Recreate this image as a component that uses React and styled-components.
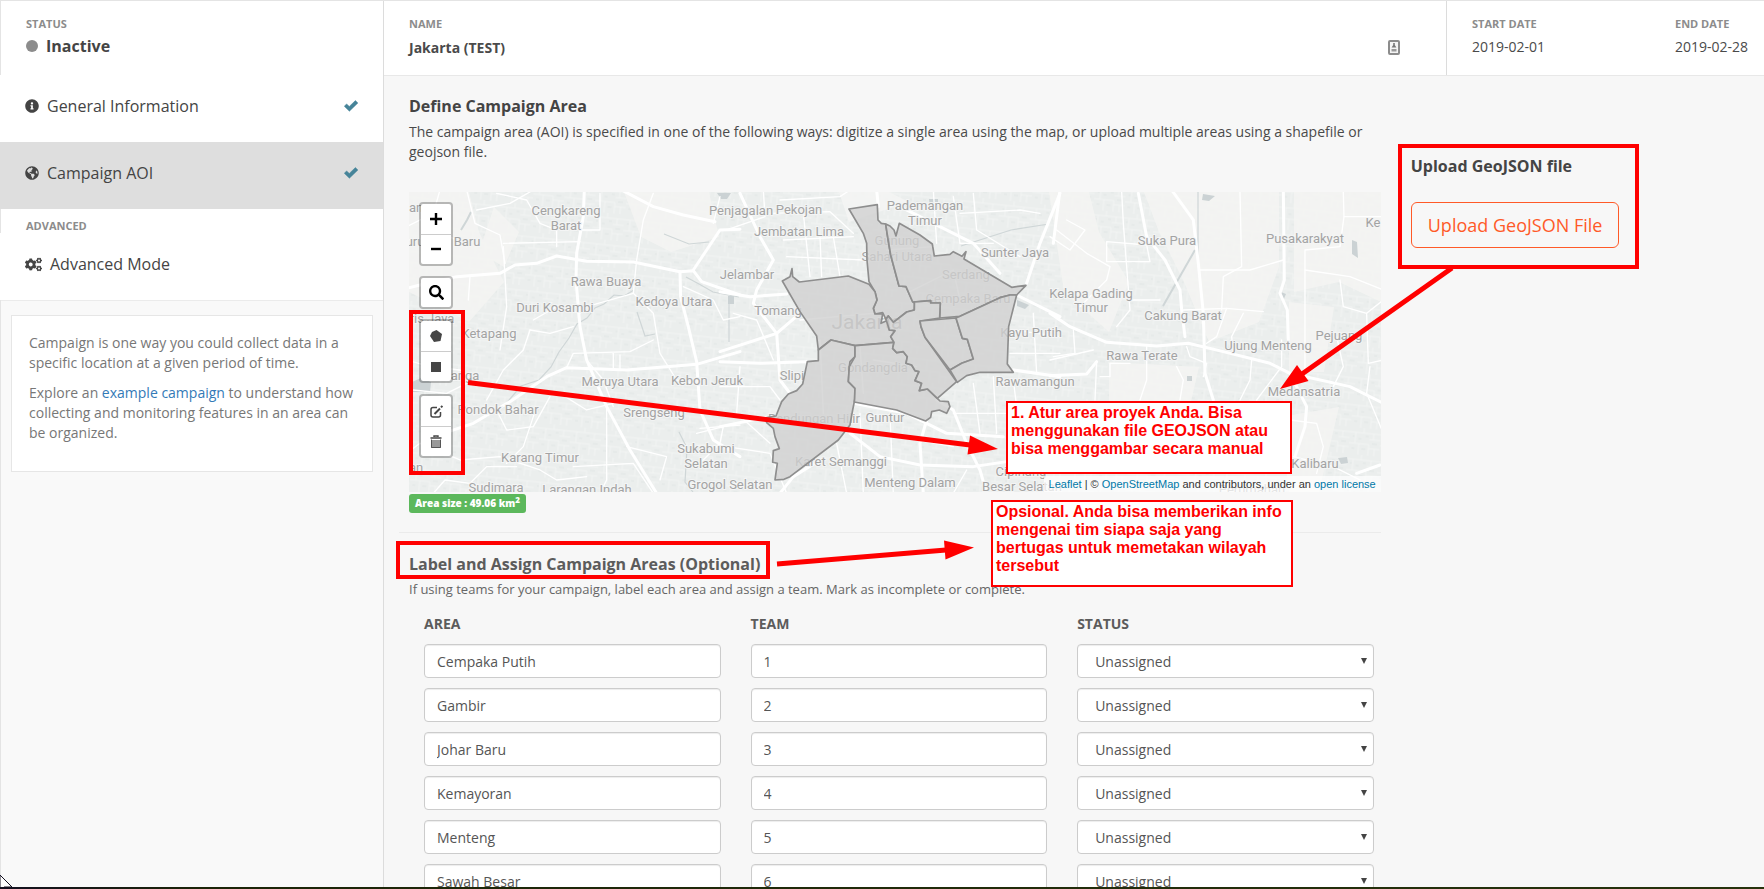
import React from "react";
import styled, { createGlobalStyle } from "styled-components";
import { FaInfoCircle, FaGlobeAmericas, FaCogs, FaSearch } from "react-icons/fa";

const GlobalStyle = createGlobalStyle`
  *, *::before, *::after { box-sizing: border-box; }
  html, body, #root { height: 100%; }
  body {
    margin: 0;
    font-family: "Open Sans", sans-serif;
    font-size: 14px;
    line-height: 20px;
    color: #4a4a4a;
    background: #f7f7f7;
  }
  h2, p { margin: 0; }
`;

const Page = styled.div`
  position: relative;
  display: flex;
  height: 100vh;
  overflow: hidden;
  border-top: 1px solid #e4e4e4;
`;

const Sidebar = styled.aside`
  flex: 0 0 384px;
  border-left: 1px solid #e4e4e4;
  border-right: 1px solid #dcdcdc;
  background: #f9f9f9;
`;

const SideTop = styled.div`
  background: #fff;
  border-bottom: 1px solid #ebebeb;
`;

const StatusBlock = styled.div`
  height: 74px;
  padding: 14px 25px 0;
`;

const Caption = styled.div`
  font-size: 11px;
  line-height: 18px;
  font-weight: 700;
  color: #8c8c8c;
  text-transform: uppercase;
`;

const StatusValue = styled.div`
  display: flex;
  align-items: center;
  gap: 8px;
  margin-top: 1px;
  font-size: 16px;
  line-height: 24px;
  font-weight: 700;
  color: #444;
`;

const Dot = styled.span`
  width: 12px;
  height: 12px;
  border-radius: 50%;
  background: #8c8c8c;
`;

const NavItem = styled.a`
  display: flex;
  align-items: center;
  gap: 8px;
  height: 67px;
  margin-left: -1px;
  padding: 0 25px 5px;
  font-size: 16px;
  color: #444;
  text-decoration: none;
  background: ${(p) => (p.$active ? "#dedede" : "#fff")};

  > span { flex: 1; }
`;

const AdvancedCaption = styled(Caption)`
  height: 24px;
  padding: 8px 25px 0;
`;

const InfoCard = styled.div`
  height: 157px;
  margin: 14px 10px 0;
  padding: 17px;
  background: #fff;
  border: 1px solid #e6e6e6;
  color: #777;

  p + p { margin-top: 10px; }
  a { color: #337ab7; text-decoration: none; }
`;

const Main = styled.main`
  flex: 1;
  min-width: 0;
`;

const Header = styled.header`
  display: flex;
  height: 75px;
  background: #fff;
  border-bottom: 1px solid #e8e8e8;
`;

const NameCell = styled.div`
  display: flex;
  flex: 1;
  justify-content: space-between;
  padding: 14px 46px 0 25px;

  svg { margin-top: 25px; }
`;

const Dates = styled.div`
  flex: 0 0 318px;
  display: grid;
  grid-template-columns: 203px 1fr;
  padding: 14px 0 0 25px;
  border-left: 1px solid #dcdcdc;
`;

const Value = styled.div`
  margin-top: ${(p) => (p.$strong ? 5 : 4)}px;
  font-weight: ${(p) => (p.$strong ? 700 : 400)};
`;

const Body = styled.div`
  display: grid;
  grid-template-columns: 3fr 1fr;
  padding-right: 31px;
`;

const AreaColumn = styled.div`
  min-width: 0;
  padding: 0 15px;
`;

const Section = styled.section`
  padding: 19px 0 0 10px;

  & + & {
    padding-top: 20px;
    border-top: 1px solid #ebebeb;
  }
`;

const Title = styled.h2`
  font-size: 16px;
  line-height: 22px;
  font-weight: 700;
  color: ${(p) => (p.$soft ? "#5c5c5c" : "#444")};
`;

const Lead = styled.p`
  margin-top: 5px;
  min-height: 40px;
`;

const SmallLead = styled.p`
  margin-top: 4px;
  font-size: 13px;
  color: #666;
`;

const MapFrame = styled.div`
  position: relative;
  height: 300px;
  margin-top: 30px;
  overflow: hidden;
  background: #eceeed;

  > svg { display: block; width: 100%; height: 100%; }
`;

const MapControls = styled.div`
  position: absolute;
  top: 10px;
  left: 10px;
  display: grid;
  gap: 10px;
`;

const ControlBar = styled.div`
  width: 34px;
  border: 2px solid rgba(0, 0, 0, 0.25);
  border-radius: 4px;
  background: #fff;
  background-clip: padding-box;
  margin-top: ${(p) => (p.$spaced ? "1px" : "0")};
`;

const ControlButton = styled.button`
  display: flex;
  align-items: center;
  justify-content: center;
  width: 30px;
  height: 30px;
  padding: 0;
  border: 0;
  background: none;
  color: #000;

  &:only-child { height: 29px; }
  & + & { border-top: 1px solid #ccc; }
`;

const Attribution = styled.div`
  position: absolute;
  right: 0;
  bottom: 0;
  padding: 0 5px;
  font: 11px/16px "Liberation Sans", Arial, sans-serif;
  color: #333;
  background: rgba(255, 255, 255, 0.7);

  a { color: #0078a8; text-decoration: none; }
`;

const Badge = styled.span`
  display: block;
  width: max-content;
  height: 19px;
  margin: 2px 0 19px;
  padding: 0 6px;
  border-radius: 3px;
  background: #5cb85c;
  color: #fff;
  font-size: 10px;
  line-height: 18px;
  font-weight: 800;

  sup { font-size: 8px; line-height: 0; }
`;

const Table = styled.table`
  display: block;
  margin-top: 15px;
  padding: 0 7px 0 15px;

  thead, tbody { display: block; }
`;

const Row = styled.tr`
  display: grid;
  grid-template-columns: repeat(3, 1fr);
  gap: 30px;
  margin-bottom: 10px;
`;

const HeadCell = styled.th`
  padding: 0;
  text-align: left;
  font-weight: 700;
  color: #5c5c5c;
`;

const Cell = styled.td`
  position: relative;
  padding: 0;
`;

const fieldStyle = `
  display: block;
  width: 100%;
  height: 34px;
  border: 1px solid #ccc;
  border-radius: 4px;
  background: #fff;
  box-shadow: inset 0 1px 1px rgba(0, 0, 0, 0.075);
  font: 14px/20px "Open Sans", sans-serif;
  color: #555;
`;

const TextField = styled.input`
  ${fieldStyle}
  padding: 6px 12px;
`;

const Select = styled.select`
  ${fieldStyle}
  appearance: none;
  padding: 7px 17px 5px;
`;

const Caret = styled.svg`
  position: absolute;
  top: 14px;
  right: 7px;
  pointer-events: none;
`;

const UploadColumn = styled.div`
  padding: 79px 15px 0;
`;

const UploadButton = styled.button`
  height: 46px;
  margin-top: 25px;
  padding: 0 16px;
  border: 1px solid #ff5a28;
  border-radius: 6px;
  background: transparent;
  color: #ff5a28;
  font: 18px/24px "Open Sans", sans-serif;
  white-space: nowrap;
`;

const Markup = styled.svg`
  position: absolute;
  top: -1px;
  left: 0;
  width: 100%;
  height: 100%;
  pointer-events: none;
`;

const Note = styled.div`
  position: absolute;
  top: ${(p) => p.$top}px;
  left: ${(p) => p.$left}px;
  width: ${(p) => p.$width}px;
  height: ${(p) => p.$height}px;
  padding: 1px 3px 0;
  border: 2px solid #f00;
  background: #fff;
  color: #f00;
  font: 700 16px/18px "Liberation Sans", Arial, sans-serif;
  white-space: pre-line;
`;

const Taskbar = styled.div`
  position: absolute;
  left: 0;
  right: 0;
  bottom: 0;
  height: 2px;
  background: linear-gradient(90deg, #141020, #1b2408 200px, #26320c);
`;

const Check = () => (
  <svg width="14" height="12" viewBox="0 0 14 12" aria-hidden="true">
    <path d="M0.3 6.3 L2.6 3.9 L5.3 6.4 L11.4 0.6 L13.9 3 L5.4 11.2 Z" fill="#468499" stroke="#468499" strokeWidth="0.5" strokeLinejoin="round" />
  </svg>
);

const places = [
  ["an", 7, 20], ["uru", 6, 54], ["Baru", 58, 54],
  ["Cengkareng", 157, 23], ["Barat", 157, 38],
  ["Rawa Buaya", 197, 94], ["Kedoya Utara", 265, 114], ["Duri Kosambi", 146, 120],
  ["ris Jaya", 23, 131], ["Ketapang", 80, 146], ["Meruya Utara", 211, 194],
  ["Kebon Jeruk", 298, 193], ["Banga", 52, 188], ["Pondok Bahar", 89, 222],
  ["Srengseng", 245, 225], ["Karang Timur", 131, 270], ["Sukabumi", 297, 261],
  ["Selatan", 297, 276], ["Grogol Selatan", 321, 297], ["Sudimara", 87, 300],
  ["Larangan Indah", 178, 302], ["an", 7, 280],
  ["Penjagalan", 332, 23], ["Pekojan", 390, 22], ["Jembatan Lima", 390, 44],
  ["Pademangan", 516, 18], ["Timur", 516, 33], ["Gunung", 488, 53],
  ["Sahari Utara", 488, 69], ["Sunter Jaya", 606, 65], ["Jelambar", 338, 87],
  ["Serdang", 557, 87], ["Cempaka Baru", 559, 111], ["Tomang", 369, 123],
  ["Kayu Putih", 622, 145], ["Gondangdia", 464, 180], ["Slipi", 383, 188],
  ["Rawamangun", 626, 194], ["Bendungan Hilir", 405, 231], ["Guntur", 476, 230],
  ["Karet Semanggi", 432, 274], ["Menteng Dalam", 501, 295], ["Cipinang", 612, 284],
  ["Besar Selatan", 613, 299], ["Suka Pura", 758, 53], ["Pusakarakyat", 896, 51],
  ["Ke", 964, 35], ["Kelapa Gading", 682, 106], ["Timur", 682, 120],
  ["Cakung Barat", 774, 128], ["Pejuang", 930, 148], ["Ujung Menteng", 859, 158],
  ["Rawa Terate", 733, 168], ["Medansatria", 895, 204], ["Kalibaru", 906, 276],
  ["Perumahan", 843, 302],
];

const districts = [
  "387,87 472,74 474,120 484,130 497,132 502,165 512,225 537,318 558,320 578,364 584,370 583,390 560,396 520,427 505,408 498,418 488,398 465,402 460,385 471,360 465,335 447,305 441,240 440,190 430,160",
  "497,132 510,138 522,150 528,168 538,130 600,165 637,192 643,228 690,223 700,215 726,229 738,215 732,237 875,322 918,316 890,345 870,345 840,353 720,409 659,414 661,369 632,369 632,362 578,366 558,320 537,318 512,225 502,165",
  "187,303 210,290 216,266 218,290 238,306 385,288 447,313 465,335 471,360 460,385 465,402 488,402 483,430 505,420 508,450 525,452 512,470 522,487 405,497 333,480 295,510 290,468 240,395",
  "333,480 405,497 405,530 390,545 388,560 385,605 405,625 405,655 398,690 390,735 355,780 210,890 192,898 165,900 172,850 158,847 160,812 178,806 165,770 160,745 140,728 140,713 168,708 185,665 205,642 230,632 248,612 262,545 295,542 295,510",
  "405,497 522,487 518,505 530,518 550,515 562,530 558,550 575,555 585,572 597,575 585,602 605,610 598,632 622,627 652,655 660,663 685,665 690,680 680,700 658,690 635,695 632,712 617,723 530,690 403,666 405,625 385,605 388,560 405,530",
  "583,366 632,362 632,369 661,369 659,414 600,423 603,440 615,472 710,605 652,655 622,627 598,632 605,610 585,602 597,575 585,572 575,555 558,550 562,530 550,515 530,518 518,505 522,487 512,470 525,452 508,450 498,418 505,408 520,427 560,396 583,390",
  "600,423 708,414 727,475 742,478 760,537 725,550 690,570 615,472 603,440",
  "708,414 720,409 840,353 870,345 890,345 866,440 862,552 880,577 780,577 740,587 712,607 690,570 725,550 760,537 742,478 727,475",
];

/* Road centre lines, each list in the units of its own map tile. */
const westMajor = [
  "M553,30 L550,110 L530,220 L528,300 L540,440 L560,540 L620,680 L690,810 L770,940",
  "M20,325 L60,315 L170,290 L300,280 L345,255 L410,250 L470,228 L560,244 L700,246 L840,275 L880,272 L905,305 L1020,345",
  "M840,275 L842,350 L865,440 L890,545 L900,690 L940,780 L1020,830",
  "M100,770 L220,730 L330,665 L440,590 L500,563 L680,570 L890,553 L1020,515",
  "M665,30 L760,80 L850,105 L945,125",
  "M880,270 L960,150 L1020,148",
];
const westMinor = [
  "M200,30 L225,130 L300,165 L315,250", "M290,40 L380,60 L420,130 L470,150 L470,200", "M230,90 L330,70 L400,30",
  "M310,190 L540,185", "M600,40 L600,150 L545,150", "M760,40 L730,120 L710,240 L700,340", "M210,290 L205,360",
  "M310,200 L320,380 L300,510", "M390,450 L370,510 L310,570 L260,660", "M390,450 L450,460 L520,440",
  "M500,563 L520,520 L690,515 L760,480", "M640,570 L640,520", "M660,570 L660,525", "M20,540 L90,560 L180,570 L230,610",
  "M40,630 L140,640 L200,610", "M20,820 L60,790 L180,840 L300,830 L420,870 L470,900 L560,890", "M290,690 L320,750 L400,740 L450,650",
  "M410,680 L370,800 L320,850", "M620,680 L620,900 L600,940", "M560,540 L610,600 L640,680", "M700,340 L760,400 L780,520 L830,600 L890,610",
  "M100,940 L135,900 L210,910 L260,860 L350,860", "M680,800 L800,830 L780,900", "M900,745 L1020,735", "M560,380 L700,340",
  "M850,320 L940,360 L970,420 L1020,410", "M940,130 L960,50", "M520,860 L700,850 L760,940", "M480,640 L560,690 L640,670",
  "M400,420 L470,380 L540,400", "M20,180 L150,170 L200,200", "M120,30 L100,100 L20,140", "M890,760 L970,740 L960,790 L900,850",
];
const centreMajor = [
  "M60,40 L120,170 L160,240 L110,330 L100,370 L170,460 L180,600 L210,640",
  "M0,335 L90,350 L200,342", "M0,515 L170,460 L240,400", "M0,545 L120,550 L260,545", "M470,30 L475,80", "M540,80 L760,190 L840,280",
  "M880,570 L1020,590", "M650,660 L700,690 L740,790 L780,870 L800,940", "M400,670 L560,700 L680,760 L850,770",
  "M390,760 L480,830 L600,855 L760,860 L860,845", "M890,345 L1020,410", "M1020,40 L960,190 L920,310", "M620,720 L600,790 L610,940",
  "M0,740 L140,712", "M300,840 L220,890 L180,940",
];
const centreMinor = [
  "M130,30 L135,110 L20,150", "M180,60 L360,50 L390,30", "M250,100 L270,290", "M300,170 L305,290", "M340,170 L360,290", "M190,180 L400,170",
  "M200,230 L430,240", "M150,100 L330,95 L400,160", "M640,30 L650,190", "M720,100 L900,90 L960,100", "M700,50 L720,190 L820,190",
  "M760,40 L770,150 L900,230", "M0,620 L150,620 L180,660", "M60,560 L50,700 L150,790", "M20,800 L150,820 L200,940", "M420,700 L430,940",
  "M510,700 L520,940", "M480,760 L700,800", "M350,790 L380,940", "M760,610 L780,760", "M820,590 L830,760", "M880,600 L900,760",
  "M700,700 L880,700", "M880,450 L1020,470", "M870,520 L1020,520", "M940,400 L950,580", "M740,870 L700,940", "M40,400 L110,420 L160,540",
  "M500,210 L640,200", "M560,340 L700,270 L720,360", "M240,420 L460,400", "M420,500 L430,640", "M300,480 L310,700", "M460,540 L590,560",
];
const eastMajor = [
  "M30,30 L10,190", "M365,30 L430,120 L445,250 L460,400 L465,580 L490,660", "M0,400 L60,440 L170,487 L320,498 L415,490 L520,515 L660,550 L720,580 L900,620 L1000,670",
  "M265,40 L290,170 L345,240 L390,330 L395,390 L405,470", "M700,30 L703,300 L690,340 L712,390 L715,480", "M720,580 L770,680 L765,740 L735,830",
  "M0,587 L110,582 L140,545", "M920,880 L990,855",
];
const eastMinor = [
  "M215,35 L220,130 L240,390 L200,440", "M20,150 L110,220 L180,260 L170,300 L90,380", "M50,120 L105,150 L60,210 L0,170",
  "M170,185 L290,195 L300,245 L170,245 Z", "M240,360 L330,360", "M400,390 L530,385 L640,395", "M530,385 L500,470 L470,490",
  "M570,35 L575,260 L520,290 L515,390", "M445,270 L600,270 L700,240", "M580,400 L545,470 L550,520", "M605,540 L600,600 L570,660",
  "M695,480 L695,560 L620,660", "M880,35 L882,110 L1000,110", "M882,110 L870,200 L765,210 L765,600", "M765,270 L900,290 L1000,330",
  "M870,300 L880,380 L950,400 L955,550 L1000,540", "M1000,360 L950,400", "M720,720 L800,730 L820,800 L800,880", "M860,470 L880,560 L850,620",
  "M410,500 L420,530 L470,550 L460,590", "M140,545 L135,660", "M290,500 L290,600 L270,660", "M150,590 L180,590 L180,550 L240,550",
  "M0,540 L130,510", "M70,450 L75,520 L10,530", "M380,560 L400,600 L390,660", "M730,830 L850,860 L930,900", "M960,560 L950,640 L1000,760",
];

const Roads = ({ lines, width }) => (
  <g fill="none" stroke="#fff" strokeWidth={width} strokeLinejoin="round" strokeLinecap="round">
    {lines.map((d) => <path key={d} d={d} />)}
  </g>
);

const CampaignMap = () => (
  <svg role="img" aria-label="Campaign area map">
    <defs>
      <pattern id="lanes" width="31" height="27" patternUnits="userSpaceOnUse" patternTransform="rotate(6)">
        <path d="M0 5H14V0M14 5H31M6 5V16H0M6 16H20V27M20 11H31M24 11V5M10 16V27M26 20V27M20 20H31" fill="none" stroke="#f2f4f3" strokeWidth="1" />
        <path d="M3 9H5M16 8H19M9 11H12M23 15H28M13 21H17M3 21H6" stroke="#e6eae9" strokeWidth="2" />
      </pattern>
    </defs>
    <rect width="100%" height="300" fill="#ebeeed" />
    <rect width="100%" height="300" fill="url(#lanes)" />
    <g fill="#f5f5f3" opacity="0.85">
      <path d="M0 0H60L70 40L95 90L60 130L0 100Z" />
      <path d="M215 0H300L310 45L262 60L232 45Z" />
      <path d="M85 15L110 40L95 75L70 60Z" />
      <path d="M430 0H480L500 10L440 30Z" />
      <path d="M640 0H680L690 40L720 90L700 140L655 100Z" />
      <path d="M735 0H870V75L850 130L800 150L775 90L750 40Z" />
      <path d="M885 0H972V110L930 90L885 100Z" />
      <path d="M700 170L790 175L775 240L700 235Z" />
      <path d="M880 110L925 115L915 180L880 180Z" />
      <path d="M870 225L930 215L910 300H880Z" />
    </g>
    <g fill="#cbd2d4">
      <path d="M3 190L12 186L22 190L21 200L4 200Z" />
      <path d="M794 2L806 4L800 9L793 8Z" />
      <path d="M943 48L948 50L949 66L943 62Z" />
      <path d="M872 100L877 102L874 109Z" />
      <path d="M778 184H783V189H778Z" />
      <path d="M929 266L938 265L939 271L932 272Z" />
      <path d="M319 104H325V112H319Z" />
      <path d="M520 7H529V17H521Z" />
      <path d="M608 108L620 113L616 117L608 114Z" />
      <path d="M308 1H322L318 7H312Z" />
    </g>
    <g fill="none" stroke="#cfd6d7" strokeWidth="1.2">
      <path d="M225 98L215 104L205 103L195 112L186 116L178 126L168 132L160 146L150 160L142 175L130 188L112 194L95 214L78 224" />
      <path d="M277 85L290 92L304 100L330 105" />
      <path d="M228 120L236 144L246 142" />
      <path d="M754 114L786 58" strokeWidth="2" />
      <path d="M789 0V68" />
      <path d="M552 54L602 38L640 32" />
      <path d="M52 38L58 28L62 20" strokeWidth="2" />
      <path d="M270 240L278 256L276 290L284 300" />
      <path d="M255 42L280 52L300 50" />
      <path d="M320 112V150" />
    </g>
    <g transform="translate(-9 -12) scale(0.3333)">
      <Roads lines={westMinor} width={4} />
      <Roads lines={westMajor} width={9} />
    </g>
    <g transform="translate(641 -12) scale(0.3333)">
      <Roads lines={eastMinor} width={4} />
      <Roads lines={eastMajor} width={9} />
    </g>
    <g transform="translate(311 -12) scale(0.3333)">
      <Roads lines={centreMinor} width={4} />
      <Roads lines={centreMajor} width={9} />
    </g>
    <g fontFamily="Roboto, sans-serif" fontSize="13" fill="#a3a3a3" stroke="#f4f5f5" strokeWidth="2" paintOrder="stroke" textAnchor="middle">
      {places.map(([name, x, y]) => <text key={`${name}${x}${y}`} x={x} y={y}>{name}</text>)}
      <text x="458" y="137" fontSize="21">Jakarta</text>
    </g>
    <g transform="translate(311 -12) scale(0.3333)" fill="#cfcfcf" fillOpacity="0.78" stroke="#8e8e8e" strokeWidth="5" strokeLinejoin="round">
      {districts.map((points) => <polygon key={points} points={points} />)}
    </g>
  </svg>
);

const teams = ["Cempaka Putih", "Gambir", "Johar Baru", "Kemayoran", "Menteng", "Sawah Besar"];

export default function App() {
  return (
    <Page>
      <GlobalStyle />
      <Sidebar>
        <SideTop>
          <StatusBlock>
            <Caption>Status</Caption>
            <StatusValue><Dot />Inactive</StatusValue>
          </StatusBlock>
          <NavItem href="#general"><FaInfoCircle size={14} /><span>General Information</span><Check /></NavItem>
          <NavItem href="#aoi" $active><FaGlobeAmericas size={14} /><span>Campaign AOI</span><Check /></NavItem>
          <AdvancedCaption>Advanced</AdvancedCaption>
          <NavItem href="#advanced"><FaCogs size={17} /><span>Advanced Mode</span></NavItem>
        </SideTop>
        <InfoCard>
          <p>Campaign is one way you could collect data in a specific location at a given period of time.</p>
          <p>Explore an <a href="#example">example campaign</a> to understand how collecting and monitoring features in an area can be organized.</p>
        </InfoCard>
      </Sidebar>

      <Main>
        <Header>
          <NameCell>
            <div>
              <Caption>Name</Caption>
              <Value $strong>Jakarta (TEST)</Value>
            </div>
            <svg width="12" height="16" viewBox="0 0 12 16" aria-hidden="true">
              <rect x="1" y="1" width="10" height="13" rx="1" fill="#f4f4f4" stroke="#8c8c8c" strokeWidth="2" />
              <path d="M5.2 3H6.8V5L8.4 7.5H3.6L5.2 5Z" fill="#777" />
              <rect x="3.5" y="9" width="5" height="2.5" fill="#999" />
            </svg>
          </NameCell>
          <Dates>
            <div><Caption>Start date</Caption><Value>2019-02-01</Value></div>
            <div><Caption>End date</Caption><Value>2019-02-28</Value></div>
          </Dates>
        </Header>

        <Body>
          <AreaColumn>
            <Section>
              <Title>Define Campaign Area</Title>
              <Lead>The campaign area (AOI) is specified in one of the following ways: digitize a single area using the map, or upload multiple areas using a shapefile or geojson file.</Lead>
              <MapFrame>
                <CampaignMap />
                <MapControls>
                  <ControlBar>
                    <ControlButton aria-label="Zoom in">
                      <svg width="12" height="12"><path d="M6 0V12M0 6H12" stroke="#000" strokeWidth="2.4" /></svg>
                    </ControlButton>
                    <ControlButton aria-label="Zoom out">
                      <svg width="12" height="12"><path d="M1 5H11" stroke="#000" strokeWidth="2.4" /></svg>
                    </ControlButton>
                  </ControlBar>
                  <ControlBar>
                    <ControlButton aria-label="Search"><FaSearch size={15} /></ControlButton>
                  </ControlBar>
                  <ControlBar>
                    <ControlButton aria-label="Draw a polygon">
                      <svg width="12" height="12"><path d="M6.5 0L12 4L10.5 11L4 12L0 6L2 2Z" fill="#464646" /></svg>
                    </ControlButton>
                    <ControlButton aria-label="Draw a rectangle">
                      <svg width="10" height="10"><rect width="10" height="10" fill="#464646" /></svg>
                    </ControlButton>
                  </ControlBar>
                  <ControlBar $spaced>
                    <ControlButton aria-label="Edit layers">
                      <svg width="13" height="13" fill="none" stroke="#464646">
                        <path d="M7 2.5H3Q1 2.5 1 4.5V10Q1 12 3 12H8.5Q10.5 12 10.5 10V7" strokeWidth="1.5" />
                        <path d="M4.5 9L10 3.5" strokeWidth="2" />
                        <path d="M11 2.4L12.4 1" strokeWidth="2" />
                      </svg>
                    </ControlButton>
                    <ControlButton aria-label="Delete layers">
                      <svg width="12" height="14">
                        <path d="M4 2V1H8V2M0.5 3H11.5" fill="none" stroke="#464646" strokeWidth="1.4" />
                        <rect x="1" y="5" width="10" height="8" fill="#999" />
                        <path d="M1.5 4.5V12.5H10.5V4.5" fill="none" stroke="#555" />
                      </svg>
                    </ControlButton>
                  </ControlBar>
                </MapControls>
                <Attribution>
                  <a href="#leaflet">Leaflet</a> | © <a href="#osm">OpenStreetMap</a> and contributors, under an <a href="#license">open license</a>
                </Attribution>
              </MapFrame>
              <Badge>Area size : 49.06 km<sup>2</sup></Badge>
            </Section>

            <Section>
              <Title $soft>Label and Assign Campaign Areas (Optional)</Title>
              <SmallLead>If using teams for your campaign, label each area and assign a team. Mark as incomplete or complete.</SmallLead>
              <Table>
                <thead>
                  <Row><HeadCell>AREA</HeadCell><HeadCell>TEAM</HeadCell><HeadCell>STATUS</HeadCell></Row>
                </thead>
                <tbody>
                  {teams.map((area, i) => (
                    <Row key={area}>
                      <Cell><TextField aria-label="Area" defaultValue={area} /></Cell>
                      <Cell><TextField aria-label={`Team for ${area}`} defaultValue={i + 1} /></Cell>
                      <Cell>
                        <Select aria-label={`Status of ${area}`}><option>Unassigned</option></Select>
                        <Caret width="6" height="6" aria-hidden="true"><path d="M0 0H6L3 6Z" fill="#444" /></Caret>
                      </Cell>
                    </Row>
                  ))}
                </tbody>
              </Table>
            </Section>
          </AreaColumn>

          <UploadColumn>
            <Title>Upload GeoJSON file</Title>
            <UploadButton>Upload GeoJSON File</UploadButton>
          </UploadColumn>
        </Body>
      </Main>

      <Markup aria-hidden="true">
        <g fill="none" stroke="#f00" strokeWidth="4">
          <rect x="411" y="312" width="52" height="161" />
          <rect x="398" y="543" width="370" height="34" />
          <rect x="1400" y="146" width="237" height="121" />
          <path d="M468 382.5L970 445M777 564L946 550M1452 268L1302 374" strokeWidth="5" />
        </g>
        <g fill="#f00">
          <path d="M998 449L970 435.5L967.5 454.5Z" />
          <path d="M974 547.5L944 540.5L945.5 559.5Z" />
          <path d="M1280 389L1297 365L1308.5 381Z" />
        </g>
        <path d="M0 875L12 887H4L5 889H0Z" fill="#fff" stroke="#141020" />
      </Markup>
      <Note $top={400} $left={1006} $width={286} $height={73}>{"1. Atur area proyek Anda. Bisa\nmenggunakan file GEOJSON atau\nbisa menggambar secara manual"}</Note>
      <Note $top={499} $left={991} $width={302} $height={87}>{"Opsional. Anda bisa memberikan info\nmengenai tim siapa saja yang\nbertugas untuk memetakan wilayah\ntersebut"}</Note>
      <Taskbar />
    </Page>
  );
}
